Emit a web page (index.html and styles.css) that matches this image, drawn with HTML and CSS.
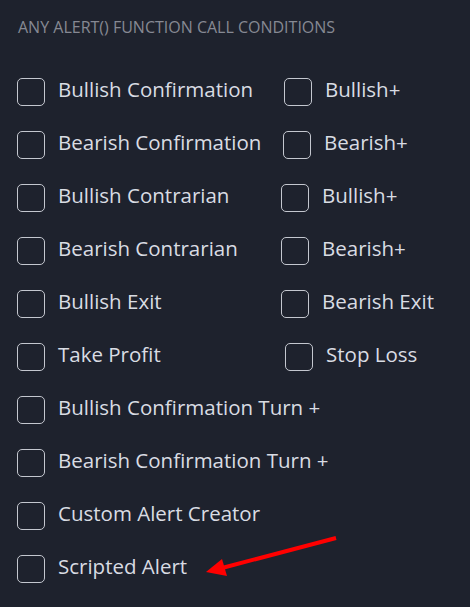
FILE: index.html
```html
<!DOCTYPE html>
<html>
<head>
<meta charset="utf-8">
<link rel="stylesheet" href="styles.css">
</head>
<body>
<div class="panel">
  <div class="heading">ANY ALERT() FUNCTION CALL CONDITIONS</div>
  <div class="list">
    <div class="row col-284">
      <label class="item"><span class="box"></span><span class="text">Bullish Confirmation</span></label>
      <label class="item"><span class="box"></span><span class="text">Bullish+</span></label>
    </div>
    <div class="row col-283">
      <label class="item"><span class="box"></span><span class="text">Bearish Confirmation</span></label>
      <label class="item"><span class="box"></span><span class="text">Bearish+</span></label>
    </div>
    <div class="row col-281">
      <label class="item"><span class="box"></span><span class="text">Bullish Contrarian</span></label>
      <label class="item"><span class="box"></span><span class="text">Bullish+</span></label>
    </div>
    <div class="row col-281">
      <label class="item"><span class="box"></span><span class="text">Bearish Contrarian</span></label>
      <label class="item"><span class="box"></span><span class="text">Bearish+</span></label>
    </div>
    <div class="row col-281">
      <label class="item"><span class="box"></span><span class="text">Bullish Exit</span></label>
      <label class="item"><span class="box"></span><span class="text">Bearish Exit</span></label>
    </div>
    <div class="row col-285">
      <label class="item"><span class="box"></span><span class="text">Take Profit</span></label>
      <label class="item"><span class="box"></span><span class="text">Stop Loss</span></label>
    </div>
    <div class="row">
      <label class="item"><span class="box"></span><span class="text">Bullish Confirmation Turn +</span></label>
    </div>
    <div class="row">
      <label class="item"><span class="box"></span><span class="text">Bearish Confirmation Turn +</span></label>
    </div>
    <div class="row">
      <label class="item"><span class="box"></span><span class="text">Custom Alert Creator</span></label>
    </div>
    <div class="row">
      <label class="item"><span class="box"></span><span class="text">Scripted Alert</span></label>
    </div>
  </div>
</div>
<svg class="arrow" width="470" height="607" viewBox="0 0 470 607">
  <line x1="336" y1="538" x2="222" y2="568" stroke="#ff0000" stroke-width="4"/>
  <polygon points="206,572 222,559 227,576" fill="#ff0000"/>
</svg>
</body>
</html>
```
FILE: styles.css
```css
html, body {
  margin: 0;
  padding: 0;
  background: #1e222d;
  width: 470px;
  height: 607px;
  overflow: hidden;
}
body {
  position: relative;
  font-family: "Open Sans", "Noto Sans", sans-serif;
  color: #d9dce3;
}
.panel {
  padding: 18px 0 0 17px;
}
.heading {
  font-size: 16px;
  line-height: 18px;
  color: #868993;
  margin-left: 1px;
  margin-bottom: 29px;
}
.list {
  display: flex;
  flex-direction: column;
}
.row {
  height: 53px;
  display: grid;
  grid-template-columns: 264px auto;
  align-items: center;
}
.row.col-284 { grid-template-columns: 267px auto; }
.row.col-283 { grid-template-columns: 266px auto; }
.row.col-281 { grid-template-columns: 264px auto; }
.row.col-285 { grid-template-columns: 268px auto; }
.item {
  display: flex;
  align-items: center;
  gap: 13px;
}
.box {
  width: 26px;
  height: 26px;
  border: 1px solid #c4c7cf;
  border-radius: 5px;
  flex: none;
}
.text {
  font-size: 20.5px;
  font-weight: 500;
  line-height: 28px;
  margin-top: -3px;
  margin-bottom: 3px;
  white-space: nowrap;
}
.arrow {
  position: absolute;
  left: 0;
  top: 0;
}
```
